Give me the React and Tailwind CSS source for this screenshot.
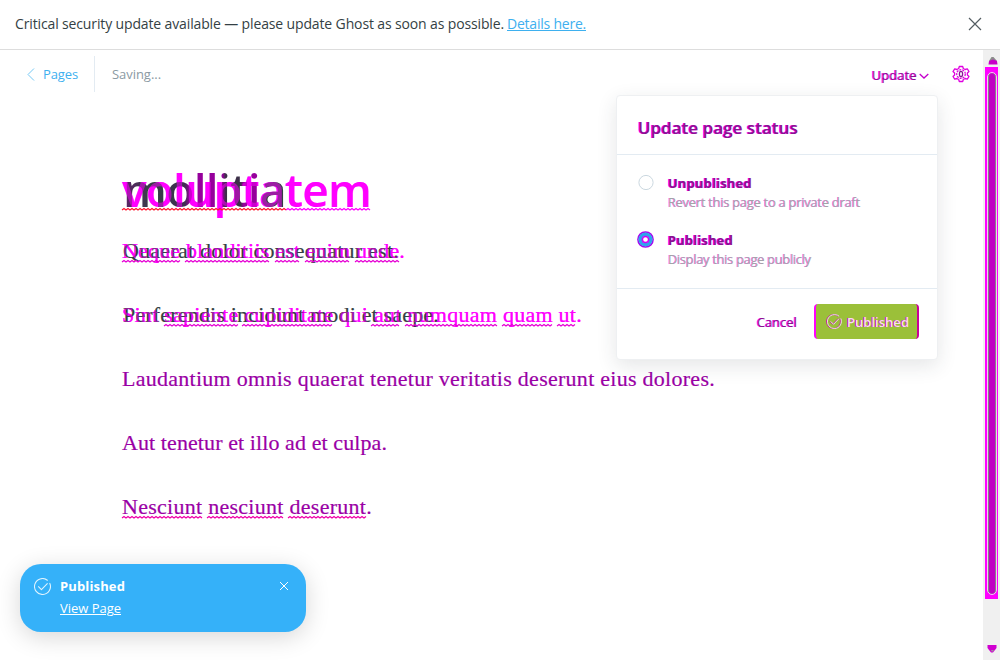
import { useLayoutEffect, useRef } from "react";

const sans = "font-['Open_Sans','Noto_Sans',sans-serif]";
const ghosted = "text-[#861590] [text-shadow:-1px_0_0_#ff00ff]";
const faint = "text-[#a3a3a8] [text-shadow:-0.7px_0_0_#ff00ffa0]";

// Spreads the letters so that the text takes up the given width.
function Fit({ width, className = "", children }) {
  const ref = useRef(null);
  useLayoutEffect(() => {
    const el = ref.current;
    el.style.letterSpacing = "0px";
    const natural = el.getBoundingClientRect().width;
    el.style.letterSpacing = (width - natural) / children.length + "px";
  }, [width, children]);
  return (
    <span ref={ref} className={"inline-block whitespace-nowrap " + className}>
      {children}
    </span>
  );
}

function Squiggle({ from, to, y, color = "#e600d4" }) {
  let d = "M0 2";
  for (let x = 2, up = true; x <= to - from; x += 2, up = !up) d += `L${x} ${up ? 0.5 : 2}`;
  return (
    <svg className="absolute overflow-visible" style={{ left: from, top: y }} width={to - from} height="3">
      <path d={d} fill="none" stroke={color} strokeWidth="1.2" />
    </svg>
  );
}

// Two revisions of one line, the newer drawn over the older.
function Revision({ before, beforeWidth, after, afterWidth, tone = "text-[#343f44]", children }) {
  return (
    <div className="relative h-full">
      <Fit width={afterWidth} className="text-[#ff00ff]">{after}</Fit>
      <span className="absolute top-0 left-px">
        <Fit width={beforeWidth} className={tone}>{before}</Fit>
      </span>
      <span aria-hidden="true" className="absolute top-0 left-0 text-[#ff00ff] opacity-50">
        <Fit width={afterWidth}>{after}</Fit>
      </span>
      {children}
    </div>
  );
}

function Check({ size, className = "" }) {
  return (
    <svg width={size} height={size} viewBox="0 0 16 16" fill="none" stroke="currentColor" strokeLinecap="round" strokeLinejoin="round" className={"shrink-0 " + className}>
      <path d="M14.9 5.1A7.5 7.5 0 1 1 12.6 2.1" />
      <path d="M4.2 8.2 7 11l5.5-5.700" />
    </svg>
  );
}

function Gear() {
  return (
    <svg width="18" height="18" viewBox="0 0 18 18" fill="none" stroke="#e000e0" strokeWidth="1.300" strokeLinejoin="round">
      <path d="M7.300 1.500h3.400l.6 2 1.800 1 2.200-.6 1.700 2.600L15.400 8v2l1.600 1.500-1.700 2.600-2.200-.6-1.800 1-.6 2H7.300l-.6-2-1.800-1-2.200.6L1 11.500 2.600 10V8L1 6.500l1.700-2.600 2.200.6 1.800-1z" />
      <circle cx="9" cy="9" r="4.300" strokeDasharray="2 1" />
      <ellipse cx="9" cy="9" rx="1.600" ry="2.700" stroke="#8a1a94" />
    </svg>
  );
}

function Option({ selected, label, labelWidth, hint, hintWidth }) {
  return (
    <div className="flex h-[38px] gap-[14px]">
      <svg width="17" height="17" viewBox="0 0 17 17" className="shrink-0" fill="none">
        {selected ? (
          <>
            <circle cx="8.500" cy="8.500" r="7.600" stroke="#a800ee" strokeWidth="1.500" />
            <circle cx="8.500" cy="8.500" r="5.300" stroke="#2fa3ec" strokeWidth="3.600" />
            <circle cx="8.500" cy="8.500" r="3.100" fill="#fff" stroke="#d000f5" strokeWidth="1.500" />
          </>
        ) : (
          <circle cx="9" cy="8.500" r="7.100" stroke="#cbd8e0" />
        )}
      </svg>
      <div className="text-[13px] leading-[19px]">
        <div className="h-[19px]"><Fit width={labelWidth} className={"font-bold " + ghosted}>{label}</Fit></div>
        <div className="h-5"><Fit width={hintWidth} className={faint}>{hint}</Fit></div>
      </div>
    </div>
  );
}

function StatusMenu() {
  return (
    <div className={"absolute top-[45px] left-[616px] h-[265px] w-[322px] rounded border border-[#eef0f2] bg-white shadow-[0_6px_20px_rgba(40,50,60,0.12)] " + sans}>
      <div className="flex h-[59px] items-center border-b border-[#e3ebf2] pt-[6px] pl-[21px] text-[17px]">
        <Fit width={160} className={"font-semibold " + ghosted}>Update page status</Fit>
      </div>
      <div className="flex h-[134px] flex-col gap-[19px] border-b border-[#e3ebf2] pt-[19px] pl-[20px]">
        <Option label="Unpublished" labelWidth={84} hint="Revert this page to a private draft" hintWidth={192} />
        <Option selected label="Published" labelWidth={65} hint="Display this page publicly" hintWidth={143} />
      </div>
      <div className="flex items-center justify-end gap-[17px] pt-[15px] pr-[18px] text-[13px]">
        <Fit width={40} className={"pt-[2px] " + ghosted}>Cancel</Fit>
        <button className="flex h-[35px] w-[105px] items-center rounded border-x-2 border-l-[#ff00ff] border-r-[#c90098] bg-[#9bc039] pl-[11px]">
          <Check size={15} className="text-[#efe0ee] [filter:drop-shadow(-1px_0_0_#c91aaa)]" />
          <Fit width={62} className="ml-[5px] pt-[2px] font-semibold text-[#f4e0ef] [text-shadow:-1px_0_0_#d70bae]">Published</Fit>
        </button>
      </div>
    </div>
  );
}

function Scrollbar() {
  return (
    <div className="flex w-[17px] flex-col items-start justify-between bg-[#f0f0f0] pb-[7px] pl-[2px]">
      <div className="flex flex-col items-center">
        <svg width="10" height="8" viewBox="0 0 10 8" className="mt-[7px] mb-[2px] ml-[2px]">
          <path d="M3.500 0h2L9 4H1z" fill="#8c8c8c" />
          <path d="M1 4l4-1.500L9 4l.5 3.500H.5z" fill="#c800c8" />
        </svg>
        <div className="flex h-[532px] w-[13px] justify-center bg-[#ff00ff] pt-[5px] pb-[4px] pl-px">
          <div className="w-[10px] rounded-[5px] border border-[#f6c8f6] bg-[#c000c4] shadow-[inset_-1px_0_0_#858585,inset_1px_0_0_#858585]" />
        </div>
      </div>
      <svg width="10" height="8" viewBox="0 0 10 8" className="ml-[2px]">
        <path d="M.5 0h9v3L6 7.500H4L.5 3z" fill="#d000d0" />
        <path d="M4 5h3L5 7z" fill="#999" />
      </svg>
    </div>
  );
}

function Toast() {
  return (
    <div className={"absolute top-[514px] left-5 flex h-[68px] w-[286px] rounded-[21px] bg-[#35b1f9] pt-[13px] pl-[14px] text-[13px] text-white shadow-[0_5px_24px_rgba(0,0,0,0.16)] " + sans}>
      <Check size={17} className="mt-px opacity-85" />
      <div className="ml-[9px] flex flex-1 flex-col leading-[19px]">
        <div className="h-[22px]"><Fit width={65} className="font-bold">Published</Fit></div>
        <a className="h-5"><Fit width={61} className="underline decoration-1 underline-offset-1">View Page</Fit></a>
      </div>
      <svg width="10" height="10" viewBox="0 0 10 10" stroke="white" className="mt-1 mr-[17px]">
        <path d="M1 1l8 8M9 1L1 9" />
      </svg>
    </div>
  );
}

export default function App() {
  return (
    <div className="flex h-[660px] w-[1000px] flex-col overflow-hidden bg-white">
      <div className={"flex h-[50px] shrink-0 items-center border-b border-[#dddddd] px-[15px] pb-px text-[14px] text-[#343f44] " + sans}>
        <Fit width={489} className="pb-[2px]">Critical security update available — please update Ghost as soon as possible.</Fit>
        <a className="ml-[3px] pb-[2px] text-[#3eb0ef]"><Fit width={79} className="underline decoration-1 underline-offset-1">Details here.</Fit></a>
        <svg width="14" height="14" viewBox="0 0 14 14" stroke="#545d62" strokeWidth="1.200" className="mr-[3px] ml-auto">
          <path d="M1 1l12 12M13 1L1 13" />
        </svg>
      </div>
      <div className="relative flex flex-1">
        <main className="flex-1">
          <header className={"flex h-12 items-center pl-[27px] text-[13px] " + sans}>
            <svg width="8" height="13" viewBox="0 0 8 13" fill="none" stroke="#75c8f4" className="mr-2">
              <path d="M7 .500L1 6.500l6 6" />
            </svg>
            <Fit width={35} className="pt-[2px] text-[#3eb0ef]">Pages</Fit>
            <div className="mr-[17px] ml-4 h-9 w-px bg-[#e3ebf2]" />
            <Fit width={49} className="pt-[2px] text-[#8b9aa3]">Saving...</Fit>
            <div className="mr-[13px] ml-auto flex items-center">
              <Fit width={45} className={"pt-[3px] " + ghosted}>Update</Fit>
              <svg width="10" height="6" viewBox="0 0 10 6" fill="none" stroke="#c400cc" strokeWidth="1.300" className="mt-[3px] mr-[23px] ml-[2px]">
                <path d="M.7 1L5 5l4.300-4" />
              </svg>
              <Gear />
            </div>
          </header>
          <article className="pt-[63px] pl-[122px]">
            <h1 className={"mb-[2px] h-14 text-[46px] leading-[56px] font-semibold " + sans}>
              <Revision
                before="mollitia"
                beforeWidth={163}
                after="voluptatem"
                afterWidth={249}
                tone="bg-[linear-gradient(90deg,#60206a_0,#343f44_18%,#3f2f52_38%,#96009c_41%,#96009c_61%,#3c3048_63%,#3c3048_72%,#96009c_74%,#96009c_83%,#343f44_85%)] bg-clip-text text-transparent"
              >
                <Squiggle from={0} to={164} y={47} color="#ff1830" />
                <Squiggle from={164} to={249} y={47} color="#ff00ff" />
              </Revision>
            </h1>
            <div className="flex flex-col font-['Liberation_Serif',serif] text-[22px] leading-[64px] [-webkit-text-stroke:0.2px_currentColor]">
              <div className="h-16">
                <Revision before="Quaerat dolor consequatur est." beforeWidth={276} after="Neque blanditiis est enim unde." afterWidth={283}>
                  <Squiggle from={0} to={58} y={41} />
                  <Squiggle from={63} to={147} y={41} />
                  <Squiggle from={153} to={178} y={41} />
                  <Squiggle from={183} to={227} y={41} />
                  <Squiggle from={233} to={277} y={41} />
                </Revision>
              </div>
              <div className="h-16">
                <Revision before="Perferendis incidunt modi et saepe." beforeWidth={316} after="Sint sapiente cupiditate qui aut numquam quam ut." afterWidth={460}>
                  <Squiggle from={42} to={116} y={41} />
                  <Squiggle from={120} to={210} y={41} />
                  <Squiggle from={249} to={278} y={41} />
                  <Squiggle from={283} to={375} y={41} />
                  <Squiggle from={380} to={430} y={41} />
                  <Squiggle from={435} to={454} y={41} />
                </Revision>
              </div>
              <div className="h-16 text-[#9a00a5]"><Fit width={593}>Laudantium omnis quaerat tenetur veritatis deserunt eius dolores.</Fit></div>
              <div className="h-16 text-[#9a00a5]"><Fit width={265}>Aut tenetur et illo ad et culpa.</Fit></div>
              <div className="relative h-16 text-[#9a00a5]">
                <Fit width={250}>Nesciunt nesciunt deserunt.</Fit>
                <Squiggle from={0} to={80} y={41} color="#f000a8" />
                <Squiggle from={85} to={161} y={41} color="#f000a8" />
                <Squiggle from={166} to={245} y={41} color="#f000a8" />
              </div>
            </div>
          </article>
        </main>
        <Scrollbar />
        <StatusMenu />
        <Toast />
      </div>
    </div>
  );
}
